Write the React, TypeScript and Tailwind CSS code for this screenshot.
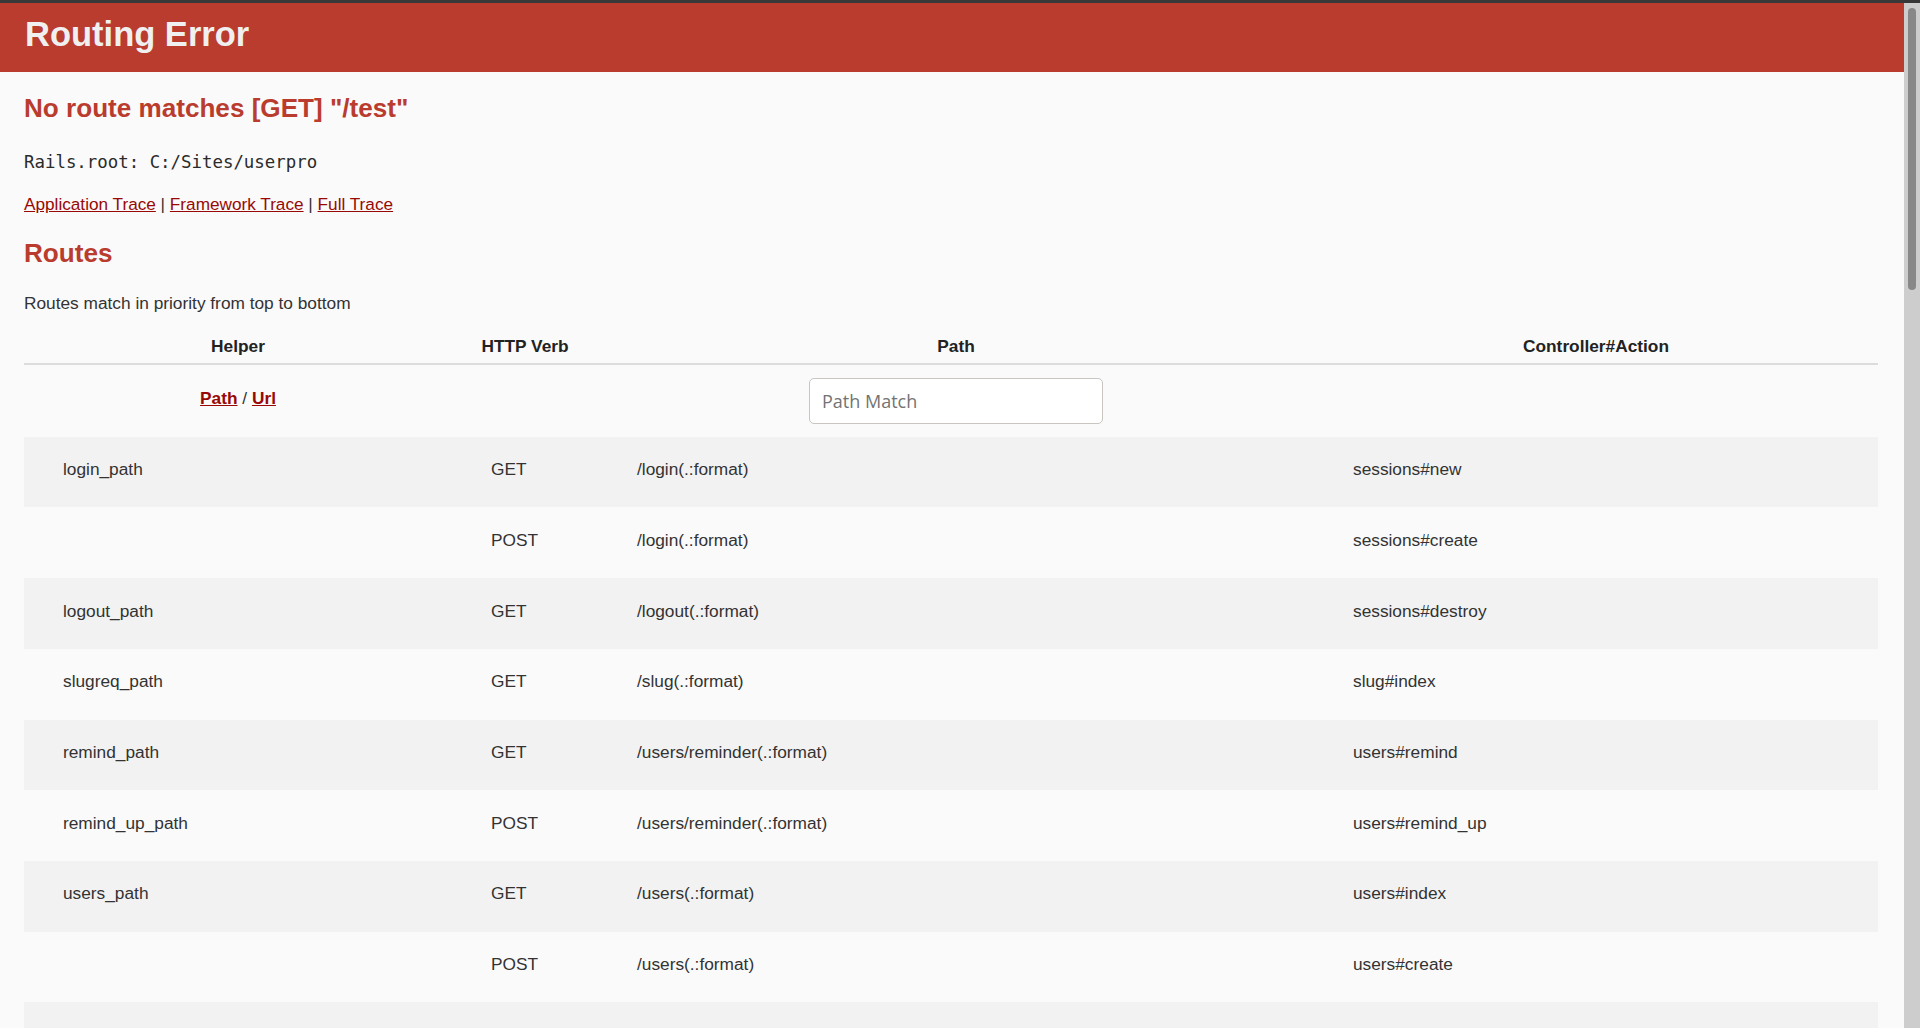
const routes = [
  { helper: "login_path", verb: "GET", path: "/login(.:format)", action: "sessions#new" },
  { helper: "", verb: "POST", path: "/login(.:format)", action: "sessions#create" },
  { helper: "logout_path", verb: "GET", path: "/logout(.:format)", action: "sessions#destroy" },
  { helper: "slugreq_path", verb: "GET", path: "/slug(.:format)", action: "slug#index" },
  { helper: "remind_path", verb: "GET", path: "/users/reminder(.:format)", action: "users#remind" },
  { helper: "remind_up_path", verb: "POST", path: "/users/reminder(.:format)", action: "users#remind_up" },
  { helper: "users_path", verb: "GET", path: "/users(.:format)", action: "users#index" },
  { helper: "", verb: "POST", path: "/users(.:format)", action: "users#create" },
];

const cols = "grid grid-cols-[428px_146px_716px_1fr]";

export default function App() {
  return (
    <div className="h-[1028px] overflow-hidden flex flex-col bg-[#fafafa] text-[#333] font-['Liberation_Sans',Arial,sans-serif]">
      <div className="h-[3px] shrink-0 bg-[#383838]" />
      <div className="flex flex-1 min-h-0">
        <div className="flex-1 min-w-0 overflow-hidden">
          <header className="h-[69px] bg-[#b93c2e] px-[25px] pt-[13px]">
            <h1 className="text-[34.5px] leading-[37px] font-bold text-[#f0f0f0]">Routing Error</h1>
          </header>

          <div className="pl-[24px] pr-[26px]">
            <h2 className="mt-[20px] text-[26.1px] leading-[32px] font-bold text-[#b93c2e]">
              No route matches [GET] "/test"
            </h2>
            <p className="mt-[27px] text-[17.4px] leading-[23px] text-[#2b2b2b] font-['DejaVu_Sans_Mono',monospace]">
              Rails.root: C:/Sites/userpro
            </p>
            <p className="mt-[18.5px] text-[17.2px] leading-[23px]">
              <a href="#" className="text-[#980905] underline">Application Trace</a>
              {" | "}
              <a href="#" className="text-[#980905] underline">Framework Trace</a>
              {" | "}
              <a href="#" className="text-[#980905] underline">Full Trace</a>
            </p>

            <h2 className="mt-[21.3px] text-[26.1px] leading-[32px] font-bold text-[#b93c2e]">Routes</h2>
            <p className="mt-[23.4px] text-[17.3px] leading-[23px]">Routes match in priority from top to bottom</p>

            <div className="mt-[19.8px]">
              <div className={`${cols} border-b-2 border-[#dcdcdc] text-[17.3px] leading-[23px] font-bold text-[#222]`}>
                <div className="pb-[5px] text-center">Helper</div>
                <div className="pb-[5px] text-center">HTTP Verb</div>
                <div className="pb-[5px] text-center">Path</div>
                <div className="pb-[5px] text-center">Controller#Action</div>
              </div>

              <div className={`${cols} h-[71.8px] items-center text-[17.3px] leading-[23px]`}>
                <div className="pb-[4px] text-center">
                  <a href="#" className="font-bold text-[#980905] underline">Path</a>
                  {" / "}
                  <a href="#" className="font-bold text-[#980905] underline">Url</a>
                </div>
                <div />
                <div className="flex justify-center">
                  <input
                    type="search"
                    placeholder="Path Match"
                    className="w-[294px] h-[46px] rounded-[5px] border border-[#c9c5c0] bg-white pl-[12px] text-[18px] font-['Open_Sans',sans-serif] placeholder:text-[#737373] outline-none"
                  />
                </div>
                <div />
              </div>

              {routes.map((r, i) => (
                <div
                  key={i}
                  className={`${cols} h-[70.7px] items-center text-[17.3px] leading-[23px] ${i % 2 === 0 ? "bg-[#f2f2f2]" : ""}`}
                >
                  <div className="px-[39px] pb-[5px]">{r.helper}</div>
                  <div className="px-[39px] pb-[5px]">{r.verb}</div>
                  <div className="px-[39px] pb-[5px]">{r.path}</div>
                  <div className="px-[39px] pb-[5px]">{r.action}</div>
                </div>
              ))}
              <div className="h-[70.7px] bg-[#f2f2f2]" />
            </div>
          </div>
        </div>

        <div className="w-[16px] shrink-0 bg-[#cdcdcd] pt-[5px] flex justify-center">
          <div className="w-[8px] h-[282px] rounded-full bg-[#888]" />
        </div>
      </div>
    </div>
  );
}
